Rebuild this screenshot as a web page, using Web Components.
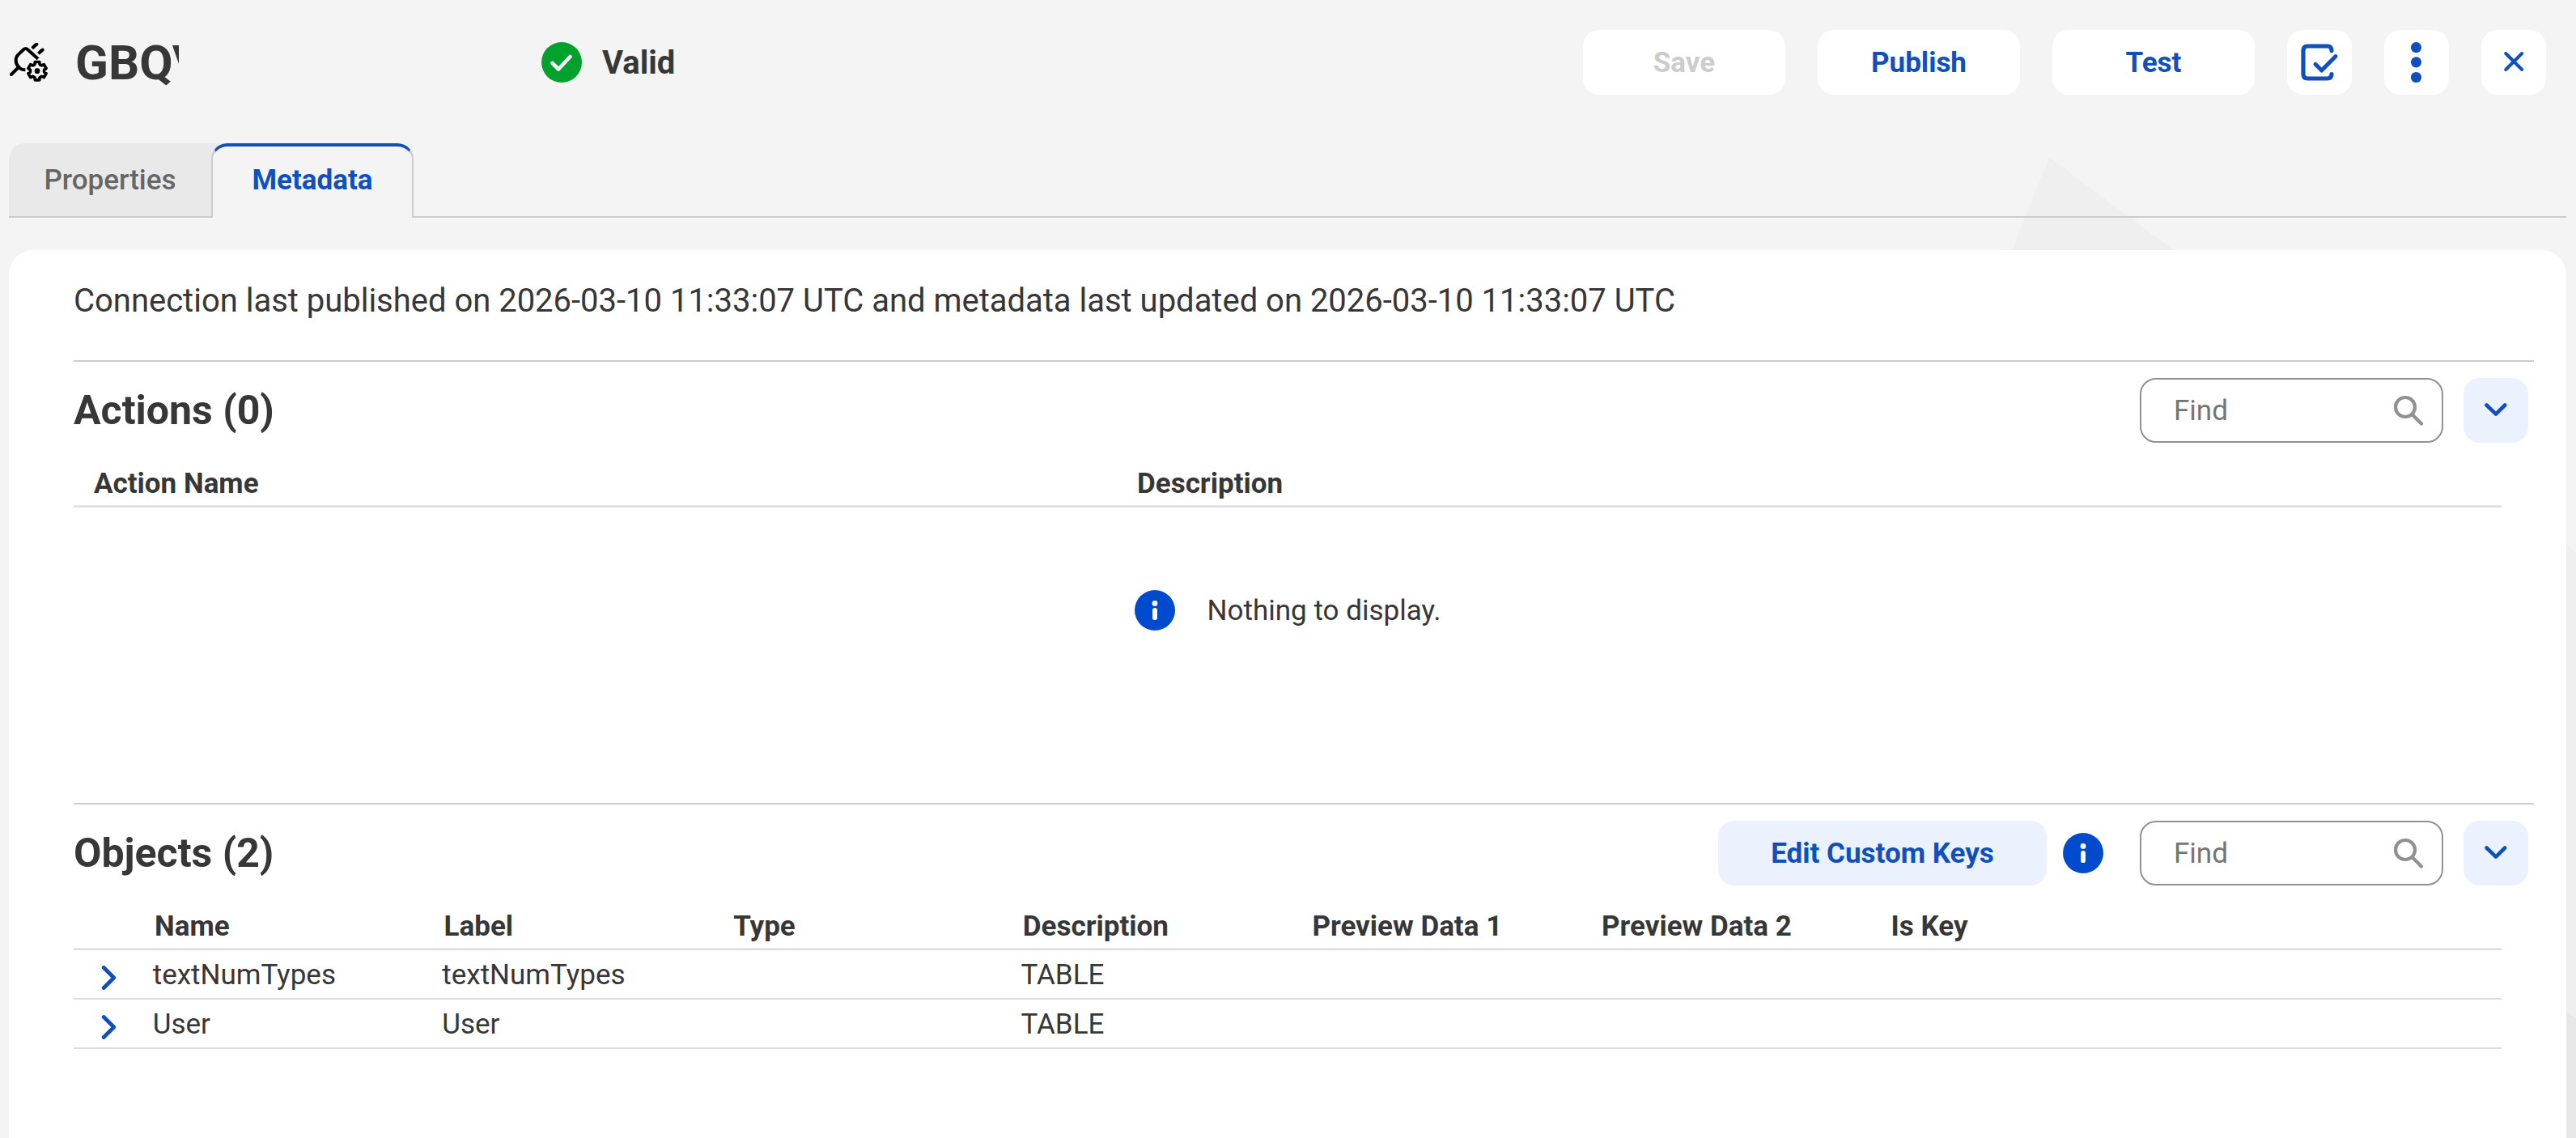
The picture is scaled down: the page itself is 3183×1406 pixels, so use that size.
<!DOCTYPE html>
<html lang="en">
<head>
<meta charset="utf-8">
<title>Connection metadata</title>
<style>
  html, body { margin: 0; padding: 0; height: 1406px; overflow: hidden; background: #f4f4f4; }
  body { font-family: Roboto, "Liberation Sans", sans-serif; font-size: 35px; color: #373737; }
</style>
</head>
<body>
<connection-page></connection-page>
<script>
const BLUE = '#0f4fbe';

const gearPath = (cx, cy) => {
  const pts = [];
  for (let i = 0; i < 6; i++) {
    const a = -90 + i * 60;
    for (const [d, r] of [[-21, 26], [-14, 34.5], [14, 34.5], [21, 26]]) {
      const t = (a + d) * Math.PI / 180;
      pts.push((cx + r * Math.cos(t)).toFixed(1) + ' ' + (cy + r * Math.sin(t)).toFixed(1));
    }
  }
  return 'M' + pts.join('L') + 'Z';
};

const ICONS = {
  plug: [47, 48, '36 69 141 144', `<g fill="none" stroke="#000" stroke-width="12" stroke-linecap="round" stroke-linejoin="round">
    <path d="M42 186L69 159"/>
    <path stroke-linecap="butt" d="M94 169C82 169 74 164 69 158C56 146 56 124 67 113L88 93Q95 87 102 93L141 128"/>
    <path stroke-linecap="butt" d="M119 89L133 76M142 109L156 96"/><path d="M131 78L136 74M154 98L158 95"/>
    <path stroke-width="11" d="${gearPath(138, 173)}"/></g><circle cx="138" cy="173" r="10"/>`],
  valid: [50, 50, '0 0 50 50', '<circle cx="25" cy="25" r="25" fill="#00a12d"/><path d="M13.5 26L21 33.5L35.5 18" fill="none" stroke="#fff" stroke-width="4.6" stroke-linecap="round" stroke-linejoin="round"/>'],
  info: [50, 50, '0 0 50 50', '<circle cx="25" cy="25" r="25" fill="#004acd"/><circle cx="25" cy="16.4" r="3.4" fill="#fff"/><path d="M25 25V34.2" stroke="#fff" stroke-width="5.8" stroke-linecap="round"/>'],
  task: [80, 80, '0 0 80 80', `<g fill="none" stroke="${BLUE}" stroke-linecap="round" stroke-linejoin="round"><path stroke-width="5.2" d="M55 25.4Q55 20 49.6 20H25.5Q20 20 20 25.5V54.5Q20 60 25.5 60H49.6Q55 60 55 54.6"/><path stroke-width="5" d="M35 42.3L42.7 50L60 32.6"/></g>`],
  more: [80, 80, '0 0 80 80', `<g fill="${BLUE}"><circle cx="39.5" cy="21.6" r="6.6"/><circle cx="39.5" cy="39.8" r="6.6"/><circle cx="39.5" cy="58.5" r="6.6"/></g>`],
  close: [80, 80, '0 0 80 80', `<path d="M30.2 29L50.2 49M50.2 29L30.2 49" stroke="${BLUE}" stroke-width="4" stroke-linecap="round"/>`],
  down: [80, 80, '0 0 80 80', `<path d="M28.5 33.5L40 44.6L51.2 33.5" fill="none" stroke="${BLUE}" stroke-width="4.6" stroke-linecap="round" stroke-linejoin="round"/>`],
  right: [20, 32, '0 0 20 32', `<path d="M3.2 3.5L15.7 16L3.2 28.5" fill="none" stroke="${BLUE}" stroke-width="4.8" stroke-linecap="round" stroke-linejoin="round"/>`],
  search: [38, 38, '0 0 38 38', '<g fill="none" stroke="#919191" stroke-width="4.2" stroke-linecap="round"><circle cx="15" cy="15" r="12"/><path d="M24 24.5L35 35.5"/></g>']
};

const define = (name, render) => customElements.define(name, class extends HTMLElement {
  connectedCallback() {
    if (this.shadowRoot) return;
    const t = document.createElement('template');
    t.innerHTML = render(this);
    this.attachShadow({ mode: 'open' }).append(t.content.cloneNode(true));
  }
});

define('app-icon', el => {
  const [w, h, box, body] = ICONS[el.getAttribute('name')];
  return `<style>:host{display:block;flex:none;width:${w}px;height:${h}px}svg{display:block}</style>
    <svg width="${w}" height="${h}" viewBox="${box}">${body}</svg>`;
});

define('app-button', () => `<style>
  :host { display: flex; flex: none; box-sizing: border-box; align-items: flex-start; justify-content: center; width: 250px; height: 80px;
    border-radius: 20px; background: #fff; color: ${BLUE}; font-weight: 700; line-height: 82px; white-space: nowrap; }
  :host([square]) { width: 80px; }
  :host([tint]) { background: #ebf2fe; }
  :host([wide]) { width: 406px; }
  :host([disabled]) { color: #ccc; }
</style><slot></slot>`);

define('search-box', () => `<style>
  :host { display: flex; flex: none; box-sizing: border-box; align-items: center; justify-content: space-between; width: 375px; height: 80px;
    padding: 0 22px 0 40px; border: 2px solid #919191; border-radius: 20px; background: #fff; color: #757575; line-height: 74px; }
  span { padding-top: 2px; }
</style><span><slot></slot></span><app-icon name="search"></app-icon>`);

define('page-header', () => `<style>
  :host { display: flex; align-items: center; box-sizing: border-box; height: 154px; padding: 0 37px 0 12px; }
  .title { width: 128px; margin-left: 34px; overflow: hidden; white-space: nowrap; font-size: 60px; line-height: 76px; padding-top: 1px; font-weight: 700; }
  .status { display: flex; align-items: center; gap: 25px; margin-left: 448px; font-size: 40px; line-height: 50px; font-weight: 700; }
  .status span { padding-top: 2px; }
  .tools { display: flex; gap: 40px; margin-left: auto; }
</style>
<app-icon name="plug"></app-icon>
<div class="title"><slot name="title"></slot></div>
<div class="status"><app-icon name="valid"></app-icon><span><slot name="status"></slot></span></div>
<div class="tools"><slot></slot></div>`);

define('tab-item', el => `<style>
  :host { display: block; box-sizing: border-box; width: 250px; height: 92px; text-align: center; font-weight: 500; color: #666; line-height: 91px; }
  .face { box-sizing: border-box; height: 92px; border-bottom: 2px solid #ccc; border-radius: 20px 0 0 0; background: #e9e9e9; }
  :host([active]) { color: ${BLUE}; font-weight: 700; line-height: 83px; background: linear-gradient(#e9e9e9,#e9e9e9) 0 0 / 20px 20px no-repeat; }
  :host([active]) .face { border: 2px solid #ccc; border-top: 4px solid ${BLUE}; border-bottom: 0; border-radius: 20px 20px 0 0; background: #f4f4f4; }
</style><div class="face"><slot></slot></div>`);

define('tab-bar', () => `<style>
  :host { display: flex; margin: 23px 12px 0 11px; height: 92px; }
  .rest { flex: 1; box-sizing: border-box; border-bottom: 2px solid #ccc; }
</style><slot></slot><div class="rest"></div>`);

define('section-bar', () => `<style>
  :host { display: flex; align-items: center; box-sizing: border-box; height: 122px; margin-right: 40px; padding-right: 7px; border-top: 2px solid #ccc; }
  h2 { margin: 0 auto 0 0; font-size: 50px; line-height: 60px; font-weight: 700; }
  .tools { display: flex; align-items: center; gap: 25px; }
</style><h2><slot name="title"></slot></h2><div class="tools"><slot></slot></div>`);

define('table-head', el => `<style>
  :host { display: grid; grid-template-columns: ${el.getAttribute('cols')}; box-sizing: border-box; width: 3000px; height: 60px; padding-left: ${el.getAttribute('inset')}px;
    font-weight: 700; line-height: 62px; border-bottom: 2px solid #ddd; box-shadow: inset 0 -1px #ebebeb; }
</style><slot></slot>`);

define('object-row', () => `<style>
  :host { display: grid; grid-template-columns: 97.7px repeat(7, 357.6px); align-items: start; box-sizing: border-box; width: 3000px; height: 61px;
    border-bottom: 2px solid #ddd; line-height: 61px; }
  app-icon { margin: 18px 0 0 34px; }
</style><app-icon name="right"></app-icon><slot></slot>`);

define('empty-note', () => `<style>
  :host { display: flex; align-items: flex-start; justify-content: center; gap: 40px; width: 3000px; height: 50px; margin: 102px 0 213px; line-height: 52px; }
</style><app-icon name="info"></app-icon><slot></slot>`);

define('metadata-panel', () => `<style>
  :host { display: block; box-sizing: border-box; height: 1097px; margin: 40px 12px 0 11px; padding-left: 80px; border-radius: 30px 30px 0 0; background: #fff; }
  .summary { height: 136px; font-size: 40px; line-height: 126px; letter-spacing: -0.013px; white-space: nowrap; }
  .keys { display: flex; align-items: center; gap: 20px; margin-right: 20px; }
</style>
<div class="summary">Connection last published on 2026-03-10 11:33:07 UTC and metadata last updated on 2026-03-10 11:33:07 UTC</div>
<section-bar><span slot="title">Actions (0)</span>
  <search-box>Find</search-box>
  <app-button square tint><app-icon name="down"></app-icon></app-button>
</section-bar>
<table-head cols="1289px 1fr" inset="25"><span>Action Name</span><span>Description</span></table-head>
<empty-note><span>Nothing to display.</span></empty-note>
<section-bar><span slot="title">Objects (2)</span>
  <div class="keys"><app-button wide tint>Edit Custom Keys</app-button><app-icon name="info"></app-icon></div>
  <search-box>Find</search-box>
  <app-button square tint><app-icon name="down"></app-icon></app-button>
</section-bar>
<table-head cols="repeat(7, 357.6px)" inset="100"><span>Name</span><span>Label</span><span>Type</span><span>Description</span><span>Preview Data 1</span><span>Preview Data 2</span><span>Is Key</span></table-head>
<object-row><span>textNumTypes</span><span>textNumTypes</span><span></span><span>TABLE</span></object-row>
<object-row><span>User</span><span>User</span><span></span><span>TABLE</span></object-row>`);

define('connection-page', () => `<style>
  :host { display: block; position: relative; width: 3183px; height: 1406px; overflow: hidden; }
  .backdrop { position: absolute; inset: 0; }
  main { position: relative; }
</style>
<svg class="backdrop" width="3183" height="1406" viewBox="0 0 3183 1406">
  <path d="M2532 194L3183 682V1406H2049Z" fill="#efefef"/>
  <path d="M3171 1250L3183 1258V1406H3171Z" fill="#e8e8e8"/>
</svg>
<main>
  <page-header>
    <span slot="title">GBQV</span><span slot="status">Valid</span>
    <app-button disabled>Save</app-button><app-button>Publish</app-button><app-button>Test</app-button>
    <app-button square><app-icon name="task"></app-icon></app-button>
    <app-button square><app-icon name="more"></app-icon></app-button>
    <app-button square><app-icon name="close"></app-icon></app-button>
  </page-header>
  <tab-bar><tab-item>Properties</tab-item><tab-item active>Metadata</tab-item></tab-bar>
  <metadata-panel></metadata-panel>
</main>`);
</script>
</body>
</html>
